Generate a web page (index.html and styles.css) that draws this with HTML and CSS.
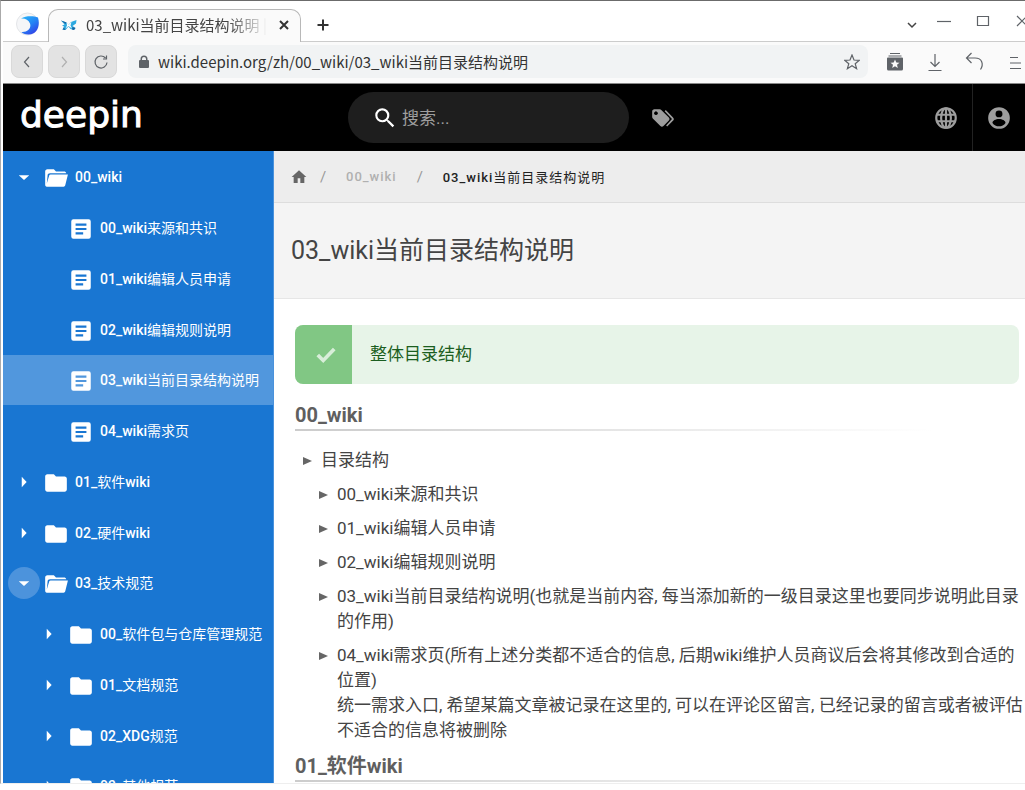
FILE: index.html
```html
<!DOCTYPE html>
<html lang="zh">
<head>
<meta charset="utf-8">
<title>03_wiki当前目录结构说明 | deepin</title>
<link rel="stylesheet" href="styles.css">
</head>
<body>
<svg class="defs" aria-hidden="true">
  <symbol id="folder" viewBox="0 0 24 24"><path d="M10 4H4c-1.1 0-2 .9-2 2v12c0 1.1.9 2 2 2h16c1.100 0 2-.9 2-2V8c0-1.100-.9-2-2-2h-8z"/></symbol>
  <symbol id="folder-open" viewBox="0 0 24 24"><path d="M3.500 20C2.500 20 2 19.200 2 18V6c0-1.100.9-2 2-2h6l2 2h7.500c1 0 1.700.6 2 1.500H6.500C5 7.500 4.500 8.300 4.300 9L3.500 17L5.800 9.500C6 9 6.300 8.800 7 8.800H23L20.600 18.500C20.300 19.500 19.800 20 19 20Z"/></symbol>
  <symbol id="doc" viewBox="0 0 24 24"><path fill-rule="evenodd" d="M5 3h14a2 2 0 0 1 2 2v14a2 2 0 0 1-2 2H5a2 2 0 0 1-2-2V5a2 2 0 0 1 2-2zM7 7v2h10V7zm0 4v2h10v-2zm0 4v2h7v-2z"/></symbol>
  <symbol id="down" viewBox="0 0 24 24"><path d="M5 9.500l7 6.500 7-6.500z"/></symbol>
  <symbol id="right" viewBox="0 0 24 24"><path d="M9 5l6.500 7L9 19z"/></symbol>
</svg>
<div class="window">
  <div class="tabbar">
    <div class="app"><svg class="app-logo" viewBox="0 0 24 24"><defs><linearGradient id="g" x1="0" y1="0" x2=".7" y2="1"><stop offset="0" stop-color="#27b8f8"/><stop offset=".55" stop-color="#2583f4"/><stop offset="1" stop-color="#3142e8"/></linearGradient></defs><circle cx="11.500" cy="12" r="11" fill="#f5f6f8" stroke="#e3e5e8"/><path d="M5 6.500C10 3.500 18 4 22 5.500C24.500 14 21 23 12 22.500C9 22.500 6.500 21.500 5.500 20C12 20.500 15.500 16 14 11.500C12.500 7.500 8.500 6 5 6.500Z" fill="url(#g)"/></svg></div>
    <div class="tab">
      <svg class="favicon" viewBox="0 0 18 16"><path d="M1 3.500L6.500 5.500L8.500 8L11 5L16.500 3L16 6.500L12.500 9L15.500 11L14 13L10.500 12L8.500 9.500L5.500 13L2.500 12.500L4 9.500L2 8.500L4.500 7.500Z" fill="#2ca9e0"/><path d="M6.500 5L8.500 8L11.500 5L10.500 8.500L12 11.500L8.500 9L5.500 11.500L7 8.500Z" fill="#fff"/><path d="M1 3.500l5.500 2-1 1.500zM12.500 10l3 1-1.500 2-2-.5zM4 10.500l1.500 2.500-3-.5z" fill="#1765a3"/></svg>
      <span class="tab-title">03_wiki当前目录结构说明 | deepin</span>
      <button class="plain" aria-label="关闭标签页"><svg class="i16 line dark2" viewBox="0 0 16 16"><path d="M4 4l8 8M12 4l-8 8"/></svg></button>
    </div>
    <button class="plain newtab" aria-label="新标签页"><svg class="i16 line dark2" viewBox="0 0 16 16"><path d="M8 2.500v11M2.500 8h11"/></svg></button>
    <div class="controls">
      <button class="plain low" aria-label="标签列表"><svg class="i16 line dark" viewBox="0 0 16 16"><path d="M4 6l4 4 4-4"/></svg></button>
      <button class="plain" aria-label="最小化"><svg class="i16 line" viewBox="0 0 16 16"><path d="M1 8.500h14"/></svg></button>
      <button class="plain" aria-label="最大化"><svg class="i16 line" viewBox="0 0 16 16"><path d="M2.500 3.500h11v9h-11z"/></svg></button>
      <button class="plain" aria-label="关闭"><svg class="i16 line" viewBox="0 0 16 16"><path d="M3 3l10 10M13 3L3 13"/></svg></button>
    </div>
  </div>
  <div class="toolbar">
    <button class="nav" aria-label="后退"><svg class="i16 line" viewBox="0 0 16 16"><path d="M10 3L5.500 8l4.500 5"/></svg></button>
    <button class="nav off" aria-label="前进"><svg class="i16 line" viewBox="0 0 16 16"><path d="M6 3l4.500 5L6 13"/></svg></button>
    <button class="nav" aria-label="刷新"><svg class="i16 line" viewBox="0 0 16 16"><path d="M14 8.500A6 6 0 1 1 12.500 4M13.500 1.500v3.500h-3.500"/></svg></button>
    <div class="address">
      <svg class="i16 lock" viewBox="0 0 16 16"><path fill-rule="evenodd" d="M4.500 6V5a3.500 3.500 0 0 1 7 0v1h.5a1 1 0 0 1 1 1v6a1 1 0 0 1-1 1H4a1 1 0 0 1-1-1V7a1 1 0 0 1 1-1zM6 6h4V5a2 2 0 0 0-4 0z"/></svg>
      <input class="url" aria-label="地址" value="wiki.deepin.org/zh/00_wiki/03_wiki当前目录结构说明">
      <button class="plain" aria-label="收藏"><svg class="i16 line" viewBox="0 0 16 16"><path d="M8 1l2 5 5.300.3-4.100 3.400 1.400 5L8 11.800l-4.600 2.900 1.400-5L.7 6.300 6 6z"/></svg></button>
    </div>
    <div class="tools">
      <button class="plain" aria-label="书签"><svg class="i20" viewBox="0 0 20 20"><path d="M5 1.500h10M3.500 4h13" stroke="#5f6368"/><path fill="#5f6368" fill-rule="evenodd" d="M3 5.500h14a1 1 0 0 1 1 1V17a1.500 1.500 0 0 1-1.500 1.500h-13A1.500 1.500 0 0 1 2 17V6.500a1 1 0 0 1 1-1zM10 7.500l-1.300 3-3.200.2 2.500 2-.8 3.200 2.800-1.700 2.800 1.700-.8-3.200 2.500-2-3.200-.2z"/></svg></button>
      <button class="plain" aria-label="下载"><svg class="i20 line" viewBox="0 0 20 20"><path d="M10 2v12M5.500 10l4.500 4.500 4.500-4.500M3.500 18.500h13"/></svg></button>
      <button class="plain" aria-label="撤销"><svg class="i20 line" viewBox="0 0 20 20"><path d="M6.500 1L1.500 6l5 5M1.500 6H10c7 0 9 6 5.500 11.500"/></svg></button>
      <button class="plain" aria-label="菜单"><svg class="i20 line" viewBox="0 0 20 20"><path d="M5 5.500h8M5 11h11M5 16.500h11"/></svg></button>
    </div>
  </div>
  <header class="header">
    <a class="logo" href="#">deepin</a>
    <label class="search">
      <svg class="i24 white" viewBox="0 0 24 24"><path d="M9.500 3A6.500 6.500 0 0 1 16 9.500c0 1.610-.59 3.090-1.560 4.230l.27.270h.79l5 5-1.500 1.500-5-5v-.79l-.27-.27A6.516 6.516 0 0 1 9.500 16a6.500 6.500 0 0 1 0-13m0 2C7 5 5 7 5 9.500S7 14 9.500 14 14 12 14 9.500 12 5 9.500 5z"/></svg>
      <input type="search" placeholder="搜索..." aria-label="搜索">
    </label>
    <button class="plain tags" aria-label="标签"><svg class="i24" viewBox="0 0 24 24"><path fill="#9e9e9e" d="M5.500 9A1.500 1.500 0 1 0 4 7.500 1.500 1.500 0 0 0 5.500 9m11.910 2.580c.36.360.59.860.59 1.420 0 .55-.22 1.050-.59 1.410l-5 5a1.996 1.996 0 0 1-2.830 0l-6.990-6.990C2.220 12.050 2 11.550 2 11V6c0-1.110.89-2 2-2h5c.55 0 1.050.22 1.410.580zm-3.870-5.870l1-1 6.500 6.500c.6.600.96 1.100.96 1.790s-.26 1.060-.63 1.420l-5.500 5.500-1-1L20.300 13z"/><circle cx="5.500" cy="7.500" r="1.500" fill="#000"/></svg></button>
    <button class="plain lang" aria-label="语言"><svg class="i24 ring" viewBox="0 0 24 24"><circle cx="12" cy="12" r="9"/><ellipse cx="12" cy="12" rx="4.500" ry="9"/><path d="M3.500 9h17M3.500 15h17M12 3v18" /></svg></button>
    <button class="plain account" aria-label="账户"><svg class="i24 gray" viewBox="0 0 24 24"><path fill-rule="evenodd" d="M12 2a10 10 0 1 1 0 20 10 10 0 0 1 0-20zm0 3a3.200 3.200 0 1 0 0 6.400A3.200 3.200 0 0 0 12 5zm0 8c-3 0-6 1.500-6 3.500a7.200 7.200 0 0 0 12 0C18 14.500 15 13 12 13z"/></svg></button>
  </header>
  <div class="body">
    <nav class="sidebar" aria-label="目录">
      <a class="row" href="#"><svg class="arrow"><use href="#down"/></svg><svg class="fold"><use href="#folder-open"/></svg><b>00_wiki</b></a>
      <a class="row page" href="#"><svg class="fold"><use href="#doc"/></svg><b>00_wiki</b>来源和共识</a>
      <a class="row page" href="#"><svg class="fold"><use href="#doc"/></svg><b>01_wiki</b>编辑人员申请</a>
      <a class="row page" href="#"><svg class="fold"><use href="#doc"/></svg><b>02_wiki</b>编辑规则说明</a>
      <a class="row page active" href="#" aria-current="page"><svg class="fold"><use href="#doc"/></svg><b>03_wiki</b>当前目录结构说明</a>
      <a class="row page" href="#"><svg class="fold"><use href="#doc"/></svg><b>04_wiki</b>需求页</a>
      <a class="row" href="#"><svg class="arrow"><use href="#right"/></svg><svg class="fold"><use href="#folder"/></svg><b>01_</b>软件<b>wiki</b></a>
      <a class="row" href="#"><svg class="arrow"><use href="#right"/></svg><svg class="fold"><use href="#folder"/></svg><b>02_</b>硬件<b>wiki</b></a>
      <a class="row" href="#"><svg class="arrow focus"><use href="#down"/></svg><svg class="fold"><use href="#folder-open"/></svg><b>03_</b>技术规范</a>
      <a class="row sub" href="#"><svg class="arrow"><use href="#right"/></svg><svg class="fold"><use href="#folder"/></svg><b>00_</b>软件包与仓库管理规范</a>
      <a class="row sub" href="#"><svg class="arrow"><use href="#right"/></svg><svg class="fold"><use href="#folder"/></svg><b>01_</b>文档规范</a>
      <a class="row sub" href="#"><svg class="arrow"><use href="#right"/></svg><svg class="fold"><use href="#folder"/></svg><b>02_XDG</b>规范</a>
      <a class="row sub" href="#"><svg class="arrow"><use href="#right"/></svg><svg class="fold"><use href="#folder"/></svg><b>03_</b>其他规范</a>
    </nav>
    <main class="main">
      <div class="crumbs">
        <a href="#" aria-label="首页"><svg class="i16 home" viewBox="0 0 24 24"><path d="M10 21v-7h4v7h6v-9h3L12 2 1 12h3v9z"/></svg></a>
        <span class="slash">/</span><a class="parent" href="#"><b>00_wiki</b></a><span class="slash">/</span><span><b>03_wiki</b>当前目录结构说明</span>
      </div>
      <div class="title"><h1>03_wiki当前目录结构说明</h1></div>
      <article class="content">
        <div class="notice">
          <div class="notice-icon"><svg viewBox="0 0 24 24"><path fill="none" stroke="#d8eed9" stroke-width="4" d="M3 12l6 6L21 5.500"/></svg></div>
          <p>整体目录结构</p>
        </div>
        <h2>00_wiki</h2>
        <ul>
          <li>目录结构
            <ul>
              <li>00_wiki来源和共识</li>
              <li>01_wiki编辑人员申请</li>
              <li>02_wiki编辑规则说明</li>
              <li>03_wiki当前目录结构说明(也就是当前内容, 每当添加新的一级目录这里也要同步说明此目录的作用)</li>
              <li>04_wiki需求页(所有上述分类都不适合的信息, 后期wiki维护人员商议后会将其修改到合适的位置)<br>统一需求入口, 希望某篇文章被记录在这里的, 可以在评论区留言, 已经记录的留言或者被评估不适合的信息将被删除</li>
            </ul>
          </li>
        </ul>
        <h2>01_软件wiki</h2>
      </article>
    </main>
  </div>
</div>
</body>
</html>
```
FILE: styles.css
```css
* { box-sizing: border-box; }
body { margin: 0; background: #fff; color: #444; font-family: Roboto, "Noto Sans CJK SC", sans-serif; }
a { color: inherit; text-decoration: none; }
b { font-weight: 500; }
svg { display: block; flex: none; fill: currentColor; }
h1, h2, p, ul { margin: 0; }
input { min-width: 0; border: 0; padding: 0; background: none; outline: none; }
.defs { position: absolute; width: 0; height: 0; }
.window { display: flex; flex-direction: column; height: calc(100vh - 6px); overflow: hidden; border-top: 1px solid #6b6b6b; border-left: 1px solid #aaa; padding-left: 2px; border-bottom: 1px solid #eee; }
.plain { display: flex; align-items: center; justify-content: center; border: 0; padding: 0; background: none; color: #6c7075; }
.i16 { width: 16px; height: 16px; }
.i20 { width: 20px; height: 20px; }
.i24 { width: 26px; height: 26px; }
.line { fill: none; stroke: #5f6368; stroke-width: 1.2; }
.dark { stroke: #444; stroke-width: 1.5; }
.dark2 { stroke: #333; stroke-width: 2; }
.white { color: #fff; }
.gray { color: #9e9e9e; }
.ring { fill: none; stroke: #9e9e9e; stroke-width: 2; }

.tabbar { display: flex; flex: none; height: 41px; border-bottom: 1px solid #ccc; font-family: "Noto Sans CJK SC", sans-serif; }
.app { display: flex; align-items: center; justify-content: center; width: 45px; padding: 6px 0 0 5px; }
.app-logo { width: 24px; height: 24px; }
.tab { display: flex; align-items: center; gap: 8px; width: 253px; height: 41px; margin-top: 8px; padding: 0 8px 10px 11px; border: 1px solid #b8b8b8; border-bottom: 0; border-radius: 10px 10px 0 0; background: #fafafa; }
.tab .favicon { width: 18px; height: 16px; }
.tab-title { flex: 1; overflow: hidden; white-space: nowrap; color: #444; font-size: 15px; line-height: 24px; mask-image: linear-gradient(90deg, #000 78%, transparent 100%); }
.newtab { width: 44px; padding-top: 8px; }
.controls { display: flex; align-items: center; gap: 23px; margin: 0 -5px 0 auto; }
.controls .low { align-self: flex-end; padding-bottom: 8px; margin-right: -7px; }

.toolbar { display: flex; flex: none; align-items: center; gap: 5px; height: 42px; padding: 0 0 2px 8px; background: #fafafa; border-bottom: 1px solid #888; }
.nav { display: flex; align-items: center; justify-content: center; width: 32px; height: 33px; padding: 0; border: 1px solid #d9d9d9; border-radius: 8px; background: #e3e3e3; }
.nav.off .line { stroke: #b0b0b0; }
.address { display: flex; flex: 1; align-items: center; gap: 6px; height: 33px; margin-left: 6px; padding: 0 8px; border-radius: 8px; background: #f1f3f4; }
.lock { color: #5f6368; }
.url { flex: 1; color: #333; font: 15px/24px "Noto Sans CJK SC", sans-serif; }
.tools { display: flex; gap: 20px; margin: 0 0 0 12px; }

.header { display: grid; grid-template-columns: 345px minmax(0, 281px) 1fr 52px 53px; flex: none; align-items: center; height: 67px; background: #000; }
.logo { padding: 0 0 5px 17px; color: #fff; font: 36px/42px "DejaVu Sans", sans-serif; -webkit-text-stroke: 1px #fff; }
.search { display: flex; align-items: center; gap: 4px; height: 51px; padding: 0 24px; border-radius: 26px; background: #1e1e1e; }
.search input { width: 100%; color: #9e9e9e; font: 17px/24px Roboto, "Noto Sans CJK SC", sans-serif; }
.search input::placeholder { color: #9e9e9e; opacity: 1; }
.tags { justify-content: flex-start; padding-left: 21px; }
.account { height: 67px; border-left: 1px solid #222; }

.body { display: flex; flex: 1; min-height: 0; }
.sidebar { flex: none; width: 271px; overflow: hidden; border-right: 1px solid #4a92dc; background: #1976d2; color: #fff; font-size: 14px; line-height: 20px; }
.row { display: flex; align-items: center; height: 51px; padding-left: 5px; white-space: nowrap; }
.row:nth-child(4n+5) { height: 50px; }
.row.page { padding-left: 65px; }
.row.sub { padding-left: 30px; }
.row.active { background: #5197dd; }
.arrow { width: 32px; height: 32px; padding: 7px; border-radius: 50%; }
.arrow.focus { background: #4c93dc; }
.fold { width: 26px; height: 26px; margin: 2px 6px 0 3px; }
.page .fold { margin-left: 0; }

.main { flex: 1; min-width: 0; overflow: hidden; }
.crumbs { display: flex; align-items: center; height: 52px; padding-left: 17px; border-bottom: 1px solid #ddd; background: #ededed; color: #222; font-size: 13px; letter-spacing: 1px; }
.home { color: #666; }
.slash { width: 39px; padding-left: 13px; color: #999; font-size: 15px; }
.parent { margin-right: 7px; color: #b0b0b0; }
.title { display: flex; align-items: center; height: 96px; padding-left: 17px; border-bottom: 1px solid #e6e6e6; background: #f4f4f4; }
h1 { color: #444; font-size: 25px; font-weight: 400; line-height: 36px; }
.content { padding: 26px 0 0 21px; color: #444; font-size: 17px; line-height: 25px; }
.notice { display: flex; height: 59px; margin-right: 6px; overflow: hidden; border-radius: 8px; background: #e7f4e8; color: #1b5e20; }
.notice-icon { display: flex; align-items: center; justify-content: center; width: 57px; padding-left: 4px; background: #81c784; }
.notice-icon svg { width: 22px; height: 22px; }
.notice p { padding: 17px 18px; }
h2 { margin: 18px 6px 0 0; padding-bottom: 3px; background: linear-gradient(90deg, #ccc, #fff 88%) bottom / 100% 2px no-repeat; color: #5f5f5f; font-size: 20px; line-height: 26px; font-weight: 700; }
.content ul { padding: 0 0 0 26px; list-style: none; }
.content h2 + ul { padding-top: 17px; }
.content ul ul { padding-left: 16px; }
.content li::before { content: ""; float: left; width: 9px; height: 8px; margin: 9px 0 0 -18px; background: #666; clip-path: polygon(0 0, 100% 50%, 0 100%); }
.content ul ul li { margin-top: 9px; }
.content ul + h2 { margin-top: 10px; }
```
